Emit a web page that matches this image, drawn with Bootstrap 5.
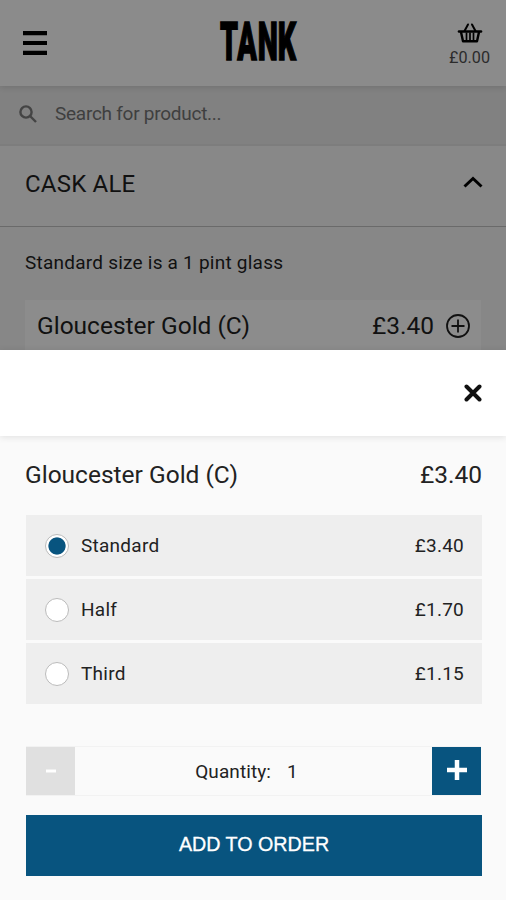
<!DOCTYPE html>
<html lang="en">
<head>
<meta charset="utf-8">
<meta name="viewport" content="width=device-width, initial-scale=1">
<title>Tank</title>
<link href="https://cdn.jsdelivr.net/npm/bootstrap@5.3.0/dist/css/bootstrap.min.css" rel="stylesheet">
<style>
body{font-family:Roboto,"Liberation Sans",sans-serif;font-size:19px;line-height:24px;color:#222;background:#fafafa;height:900px;overflow:hidden}
svg{display:block}
.menu-page{height:350px;background:#878787;color:#111;overflow:hidden}
.top-bar{height:86px;background:#8b8b8b;padding:0 16px 0 23px;box-shadow:0 1px 6px rgba(0,0,0,.13);position:relative}
.wordmark{overflow:visible}
.basket{width:41px;padding-top:3px}
.basket-total{font-size:16.2px;line-height:20px;color:#2b2b2b}
.search-bar{height:60px;background:#818181;padding:0 19px 3px;color:#3f3f3f;gap:18px;border-bottom:2px solid #7d7d7d;letter-spacing:-.26px}
.section-head{height:81px;padding:0 23px 4px 25px;border-bottom:1px solid #6a6a6a;background:#888}
.section-title{font-size:24px;letter-spacing:.2px}
.size-note{padding:24px 25px 25px;letter-spacing:.23px}
.product{margin:0 25px;height:60px;background:#8c8c8c;padding:0 11px 9px 12px}
.big-line{font-size:24.5px;line-height:30px}
.sheet{height:550px;background:#fafafa}
.sheet-head{height:86px;background:#fff;padding:0 24px;box-shadow:0 1px 7px rgba(0,0,0,.11);position:relative}
.sheet-body{padding:0 24px 0 25px}
.chosen{height:79px;color:#222;padding-bottom:2px}
.options{margin-left:1px;gap:3px}
.option{height:61px;background:#eee;padding:1px 18px 0 19px;letter-spacing:.25px}
.option .form-check-input{width:24px;height:24px;margin:0 12px 0 0;border:1px solid #bbb;background:#fff;box-shadow:none}
.option .form-check-input:checked{background:radial-gradient(circle,#08547f 0 8.2px,#fff 9px)}
.quantity{height:50px;margin:42px 1px 19px;border:1px solid #f2f2f2;border-width:1px 0}
.step{width:49px;border:0;padding:0}
.minus{background:#e0e0e0}
.plus{background:#08547f}
.amount{padding:2px 14px 0 0;letter-spacing:.1px}
.order{margin-left:1px;height:61px;width:456px;border:0;border-radius:0;background:#08547f;color:#fff;font-family:"Liberation Sans",Arial,sans-serif;font-size:19.7px;padding:0 0 1px;-webkit-text-stroke:.3px #fff}
</style>
</head>
<body>
<main>
<section class="menu-page">
  <header class="top-bar d-flex align-items-center justify-content-between">
    <svg width="43" height="24" viewBox="0 0 43 24"><path d="M0 2.2h24M0 12h24M0 21.8h24" stroke="#000" stroke-width="4.2"/></svg>
    <svg class="wordmark" width="80" height="50" viewBox="0 0 80 50"><text transform="translate(2 42.2) scale(.525 1)" x="0 33 72 110" y="0" font-family="Roboto,sans-serif" font-weight="900" font-size="54.5" stroke="#000" stroke-width="1.5">TANK</text></svg>
    <div class="basket d-flex flex-column align-items-center">
      <svg width="26" height="22" viewBox="0 0 26 22" fill="none" stroke="#000"><path d="M7.5 9 11 2.5M18.5 9 15 2.5" stroke-width="2" stroke-linecap="round"/><path d="M2 9.5h22" stroke-width="2.6" stroke-linecap="round"/><path d="M4 10 6 19.3h14L22 10" stroke-width="2.4" stroke-linejoin="round"/><path d="M9.5 10.5v8M13 10.5v8M16.5 10.5v8" stroke-width="1.7"/></svg>
      <span class="basket-total mt-1">£0.00</span>
    </div>
  </header>
  <div class="search-bar d-flex align-items-center">
    <svg width="18" height="18" viewBox="0 0 18 18" fill="none" stroke="#444" stroke-width="2.4"><circle cx="7" cy="7" r="5.6"/><path d="m11 11 6 6"/></svg>
    <span>Search for product...</span>
  </div>
  <div class="section-head d-flex align-items-center justify-content-between">
    <span class="section-title">CASK ALE</span>
    <svg class="mb-1" width="20" height="12" viewBox="0 0 20 12" fill="none" stroke="#000" stroke-width="3"><path d="m1.5 10.5 8.5-8 8.5 8"/></svg>
  </div>
  <div class="size-note">Standard size is a 1 pint glass</div>
  <div class="product big-line d-flex align-items-center">
    <span class="me-auto">Gloucester Gold (C)</span><span>£3.40</span>
    <svg class="ms-2" width="28" height="26" viewBox="-2 0 28 26" fill="none" stroke="#111" stroke-width="1.8"><circle cx="14" cy="13" r="11"/><path d="M7.5 13h13M14 6.5v13"/></svg>
  </div>
</section>
<section class="sheet">
  <div class="sheet-head d-flex align-items-center justify-content-end">
    <svg width="18" height="18" viewBox="0 0 18 18" stroke="#111" stroke-width="4" stroke-linecap="round"><path d="m2.5 2.5 13 13M15.5 2.5l-13 13"/></svg>
  </div>
  <div class="sheet-body">
    <div class="chosen big-line d-flex align-items-center justify-content-between"><span>Gloucester Gold (C)</span><span>£3.40</span></div>
    <div class="options d-flex flex-column">
      <label class="option d-flex align-items-center"><input class="form-check-input rounded-circle" type="radio" name="size" checked><span class="me-auto">Standard</span><span>£3.40</span></label>
      <label class="option d-flex align-items-center"><input class="form-check-input rounded-circle" type="radio" name="size"><span class="me-auto">Half</span><span>£1.70</span></label>
      <label class="option d-flex align-items-center"><input class="form-check-input rounded-circle" type="radio" name="size"><span class="me-auto">Third</span><span>£1.15</span></label>
    </div>
    <div class="quantity d-flex">
      <button class="step minus d-flex align-items-center justify-content-center" aria-label="Decrease"><svg width="20" height="20"><path d="M5 10h10" stroke="#fff" stroke-width="3"/></svg></button>
      <div class="amount flex-fill d-flex align-items-center justify-content-center gap-3"><span>Quantity:</span><span>1</span></div>
      <button class="step plus d-flex align-items-center justify-content-center" aria-label="Increase"><svg width="20" height="22"><path d="M0 10h20M10 0v20" stroke="#fff" stroke-width="4.5"/></svg></button>
    </div>
    <button class="btn order">ADD TO ORDER</button>
  </div>
</section>
</main>
<script src="https://cdn.jsdelivr.net/npm/bootstrap@5.3.0/dist/js/bootstrap.bundle.min.js"></script>
</body>
</html>
